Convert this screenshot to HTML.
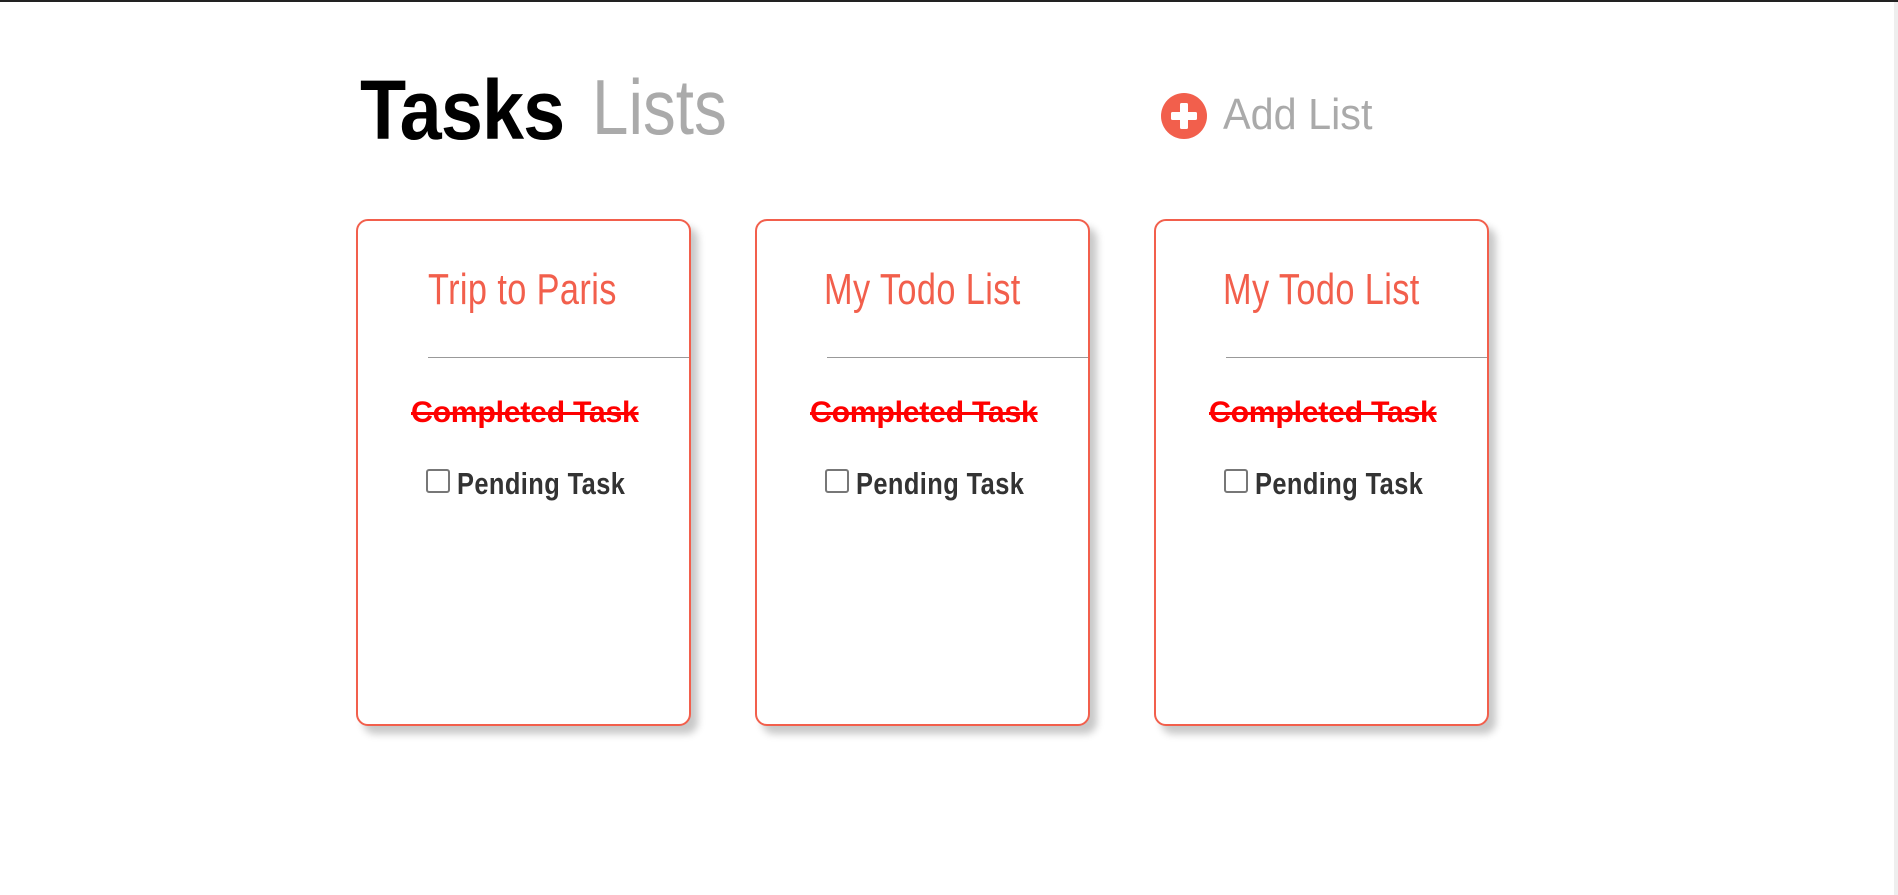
<!DOCTYPE html>
<html><head><meta charset="utf-8"><style>
html,body{margin:0;padding:0;width:1898px;height:895px;overflow:hidden;background:#fff;position:relative;font-family:"Liberation Sans",sans-serif}
.topbar{position:absolute;left:0;top:0;width:1898px;height:2px;background:#222}
.rbar{position:absolute;right:0;top:2px;width:4px;height:893px;background:#eee}
.t{position:absolute;white-space:nowrap}
.card{position:absolute;top:219px;width:331px;height:503px;border:2px solid #f25f4c;border-radius:12px;box-shadow:7px 8px 8px rgba(0,0,0,0.22);background:#fff}
.ct{position:absolute;left:70px;top:44px;font-size:44px;color:#f25f4c;font-weight:300;transform:scaleX(0.78);transform-origin:left top;letter-spacing:0.5px}
.hr{position:absolute;left:70px;right:0;top:136px;height:1px;background:#999}
.done{position:absolute;left:53px;top:175px;font-size:30px;font-weight:bold;color:#f00;transform:scaleX(1.01);transform-origin:left top;text-decoration:line-through;text-decoration-thickness:3px;letter-spacing:-0.3px}
.cb{position:absolute;left:68px;top:248px;width:24px;height:24px;border:2px solid #777;border-radius:3px;box-sizing:border-box}
.pend{position:absolute;left:99px;top:245px;font-size:31px;font-weight:bold;color:#333;transform:scaleX(0.82);transform-origin:left top;letter-spacing:0.5px}
</style></head><body>
<div class="topbar"></div><div class="rbar"></div>
<div class="t" style="left:360px;top:62px;font-size:84px;font-weight:bold;color:#000;letter-spacing:-1px;transform:scaleX(0.9);transform-origin:left top">Tasks</div>
<div class="t" style="left:592px;top:62px;font-size:78px;font-weight:300;color:#aaa;transform:scaleX(0.84);transform-origin:left top">Lists</div>
<svg class="t" style="left:1161px;top:93px" width="46" height="46" viewBox="0 0 46 46"><circle cx="23" cy="23" r="23" fill="#f25f4c"/><rect x="19" y="10" width="8" height="26" rx="1.5" fill="#fff"/><rect x="10" y="19" width="26" height="8" rx="1.5" fill="#fff"/></svg>
<div class="t" style="left:1223px;top:90px;font-size:44px;color:#aaa;transform:scaleX(0.94);transform-origin:left top">Add List</div>

<div class="card" style="left:356px"><div class="ct">Trip to Paris</div><div class="hr"></div><div class="done">Completed Task</div><div class="cb"></div><div class="pend">Pending Task</div></div>
<div class="card" style="left:755px"><div class="ct" style="left:67px">My Todo List</div><div class="hr"></div><div class="done">Completed Task</div><div class="cb"></div><div class="pend">Pending Task</div></div>
<div class="card" style="left:1154px"><div class="ct" style="left:67px">My Todo List</div><div class="hr"></div><div class="done">Completed Task</div><div class="cb"></div><div class="pend">Pending Task</div></div>
</body></html>
